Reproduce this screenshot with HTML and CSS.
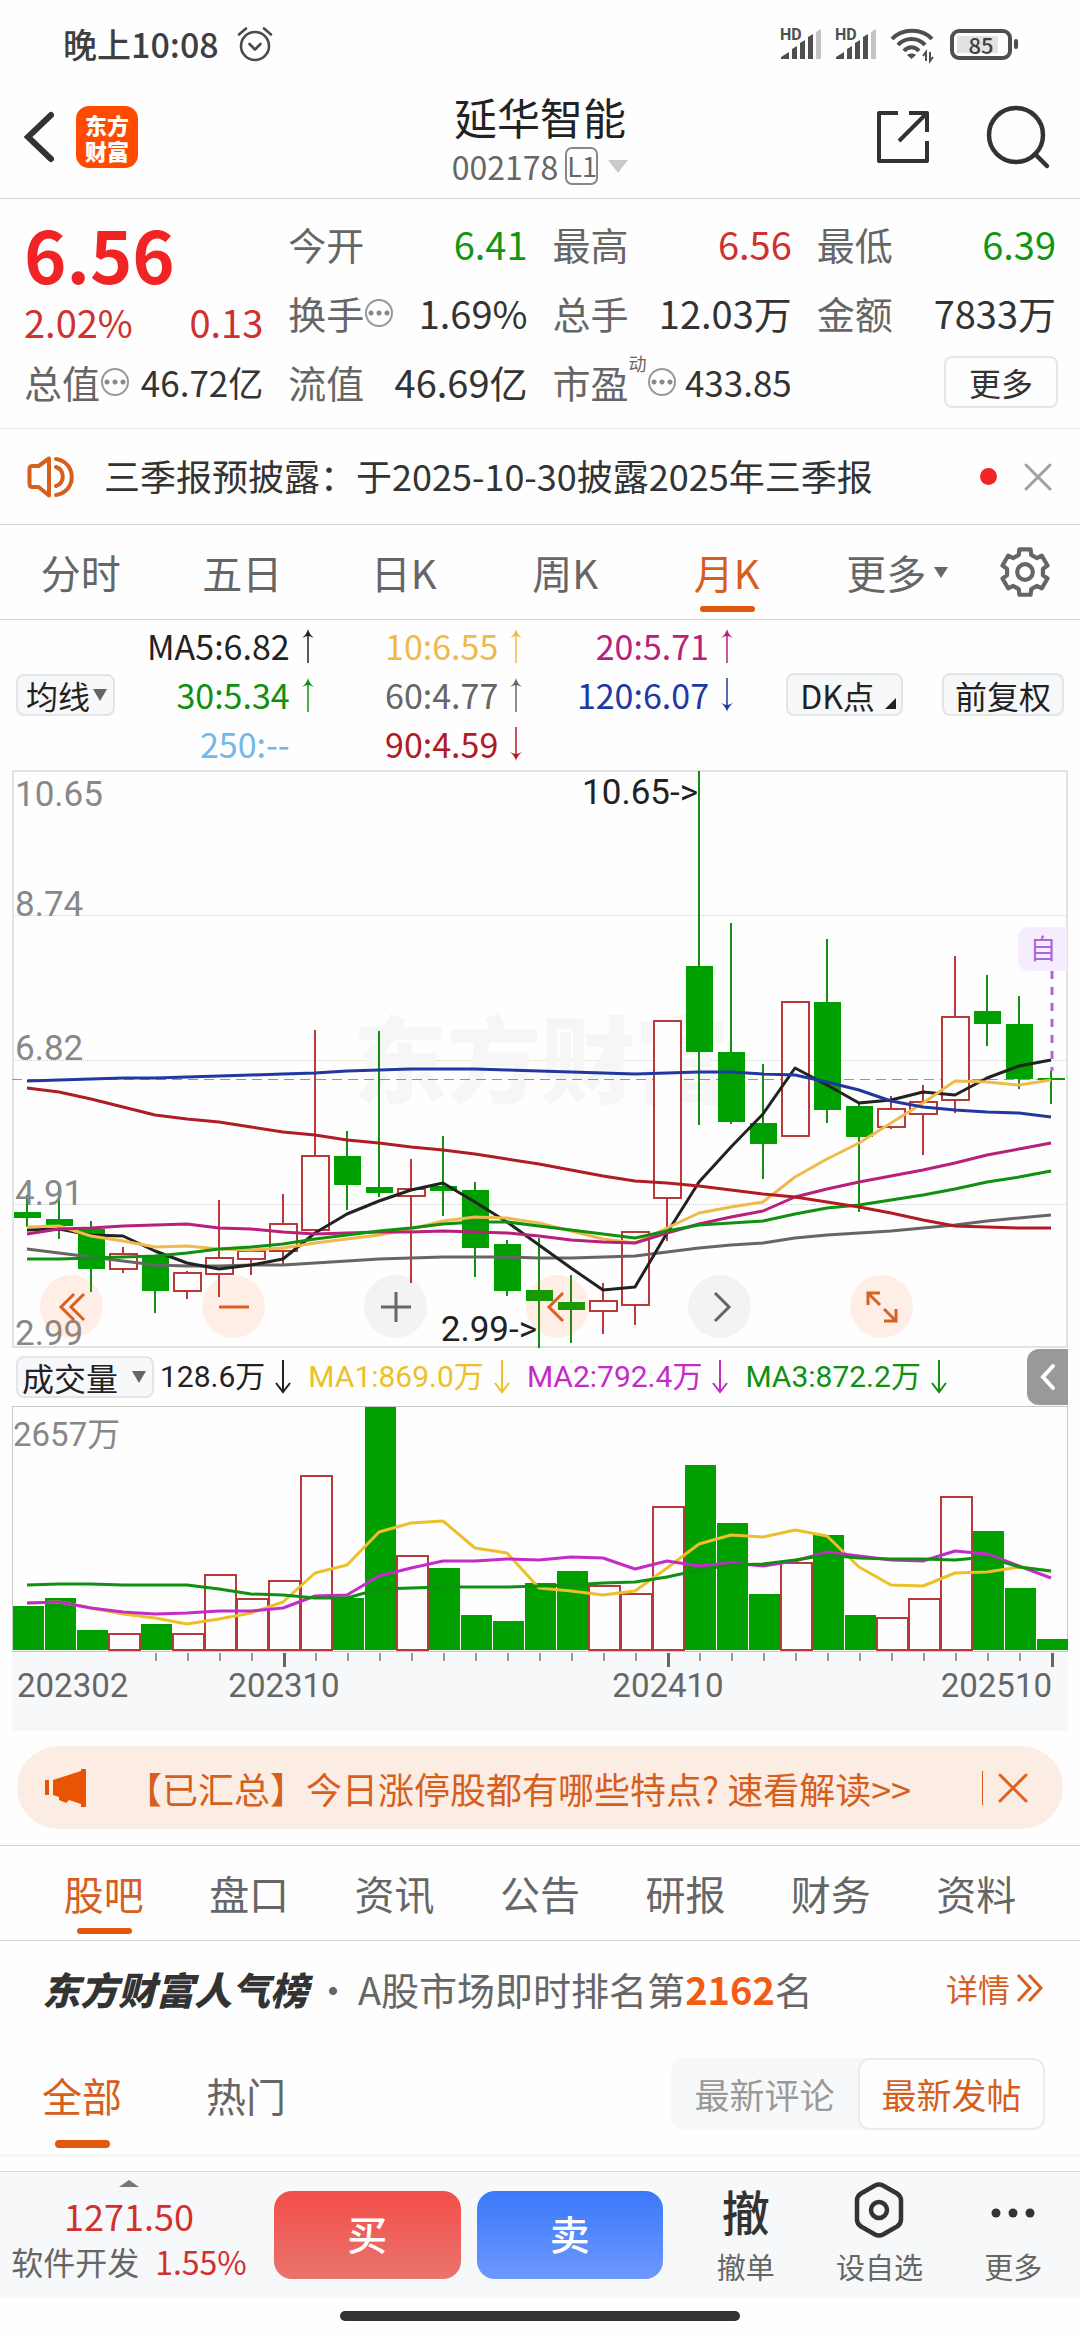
FILE: index.html
```html
<!DOCTYPE html>
<html lang="zh-CN">
<head>
  <meta charset="UTF-8">
  <meta name="viewport" content="width=device-width, initial-scale=1">
  <title>延华智能 002178</title>
  <link rel="stylesheet" href="styles.css">
</head>
<body>
  <!-- 状态栏 -->
  <div class="status">
    <span class="status-time">晚上10:08</span>
    <svg class="status-alarm" width="36" height="36" viewBox="0 0 36 36" fill="none" stroke="#4a4a4a" stroke-width="2.6" stroke-linecap="round" stroke-linejoin="round">
      <circle cx="18" cy="20" r="14"/>
      <path d="M12.500 18l5.500 5.500 5.500-5.500M2 8.500l7-6M34 8.500l-7-6"/>
    </svg>
    <div class="status-right">
      <svg width="42" height="32" viewBox="0 0 42 32">
        <text x="0" y="12" class="hd">HD</text>
        <path fill="#4f4f4f" d="M1 31v-2l8-5v7zM12 31v-10l5-3v13zM20 31v-16l5-3v19zM28 31v-22l5-3v25z"/>
        <path fill="#c4c4c4" d="M36 31v-27l5-3v30z"/>
      </svg>
      <svg width="42" height="32" viewBox="0 0 42 32">
        <text x="0" y="12" class="hd">HD</text>
        <path fill="#4f4f4f" d="M1 31v-2l8-5v7zM12 31v-10l5-3v13zM20 31v-16l5-3v19zM28 31v-22l5-3v25z"/>
        <path fill="#c4c4c4" d="M36 31v-27l5-3v30z"/>
      </svg>
      <svg width="44" height="36" viewBox="0 0 44 36" fill="none" stroke="#4f4f4f" stroke-width="4">
        <path d="M2 13C12 2 32 2 42 13M8 19c7-8 20-8 27 0M14 25c4-5 11-5 15 0"/>
        <path fill="#4f4f4f" stroke="none" d="M17 29c2-2 7-2 9 0l-4.500 4z"/>
        <path stroke-width="2" d="M36 35v-9l-3 4M40 26v9l3-4"/>
      </svg>
      <span class="battery"><span class="battery-level"></span><span class="battery-text">85</span></span>
    </div>
  </div>

  <!-- 标题栏 -->
  <header class="header">
    <button class="icon-btn" aria-label="返回">
      <svg width="34" height="54" viewBox="0 0 34 54" fill="none" stroke="#333" stroke-width="6" stroke-linecap="round"><path d="M29 5L6 27l23 22"/></svg>
    </button>
    <div class="logo">东方<br>财富</div>
    <div class="title">
      <h1>延华智能</h1>
      <p>002178<span class="level">L1</span><i class="caret"></i></p>
    </div>
    <button class="icon-btn share" aria-label="分享">
      <svg width="54" height="54" viewBox="0 0 54 54" fill="none" stroke="#333" stroke-width="4" stroke-linejoin="round"><path d="M22 3H3v48h48V31M33 3h18v19M51 3L23 31"/></svg>
    </button>
    <button class="icon-btn" aria-label="搜索">
      <svg width="64" height="64" viewBox="0 0 64 64" fill="none" stroke="#333" stroke-width="4.500" stroke-linecap="round"><circle cx="30" cy="30" r="27"/><path d="M49 49l12 12"/></svg>
    </button>
  </header>

  <!-- 行情 -->
  <section class="quote">
    <div class="price">
      <strong>6.56</strong>
      <div class="price-change"><span>2.02%</span><span>0.13</span></div>
    </div>
    <div class="cell"><span>今开</span><b class="down">6.41</b></div>
    <div class="cell"><span>最高</span><b class="up">6.56</b></div>
    <div class="cell"><span>最低</span><b class="down">6.39</b></div>
    <div class="cell"><span>换手<i class="dots"></i></span><b>1.69%</b></div>
    <div class="cell"><span>总手</span><b>12.03万</b></div>
    <div class="cell"><span>金额</span><b>7833万</b></div>
    <div class="cell small"><span>总值<i class="dots"></i></span><b>46.72亿</b></div>
    <div class="cell"><span>流值</span><b>46.69亿</b></div>
    <div class="cell small"><span>市盈<sup>动</sup><i class="dots"></i></span><b>433.85</b></div>
    <div class="cell end"><button class="more-btn">更多</button></div>
  </section>

  <!-- 公告 -->
  <section class="notice">
    <svg width="48" height="42" viewBox="0 0 48 42" fill="none" stroke="#d65f1e" stroke-width="4" stroke-linejoin="round" stroke-linecap="round">
      <path d="M2.500 13q0-3 3-3h6L22 2.500v37L11.500 31h-6q-3 0-3-3z"/>
      <path d="M29 11c9 3 9 16 0 19M29 3c21 3 21 33 0 36"/>
    </svg>
    <a href="#">三季报预披露：于2025-10-30披露2025年三季报</a>
    <i class="red-dot"></i>
    <button class="icon-btn" aria-label="关闭公告">
      <svg width="28" height="28" viewBox="0 0 28 28" stroke="#a0a0a0" stroke-width="3" stroke-linecap="round"><path d="M2 2l24 24M26 2L2 26"/></svg>
    </button>
  </section>

  <!-- 周期切换 -->
  <nav class="tabs period">
    <button class="tab">分时</button>
    <button class="tab">五日</button>
    <button class="tab">日K</button>
    <button class="tab">周K</button>
    <button class="tab active">月K</button>
    <button class="tab tab-more">更多<i class="tri"></i></button>
    <button class="icon-btn gear" aria-label="设置">
      <svg width="50" height="50" viewBox="0 0 48 48" fill="none" stroke="#666" stroke-width="4" stroke-linejoin="round">
        <path d="M18.600 2.200H29.400L30 7.600L35.200 10.600L40.200 8.400L45.600 17.800L41.200 21V27L45.600 30.200L40.200 39.600L35.200 37.400L30 40.400L29.400 45.800H18.600L18 40.400L12.800 37.400L7.800 39.600L2.400 30.200L6.800 27V21L2.400 17.800L7.800 8.400L12.800 10.600L18 7.600Z"/>
        <circle cx="24" cy="24" r="7.500"/>
      </svg>
    </button>
  </nav>

  <!-- 均线 -->
  <section class="ma">
    <span class="pick">
      <select aria-label="主图指标"><option>均线</option></select>
    </span>
    <div class="ma-list">
      <span class="c-black">MA5:6.82<svg class="arrow"><use href="#arrow-up"/></svg></span>
      <span class="c-yellow">10:6.55<svg class="arrow"><use href="#arrow-up"/></svg></span>
      <span class="c-magenta">20:5.71<svg class="arrow"><use href="#arrow-up"/></svg></span>
      <span class="c-green">30:5.34<svg class="arrow"><use href="#arrow-up"/></svg></span>
      <span class="c-gray">60:4.77<svg class="arrow"><use href="#arrow-up"/></svg></span>
      <span class="c-blue">120:6.07<svg class="arrow"><use href="#arrow-down"/></svg></span>
      <span class="c-sky">250:--<svg class="arrow"></svg></span>
      <span class="c-red">90:4.59<svg class="arrow"><use href="#arrow-down"/></svg></span>
    </div>
    <button class="chip chip-dk">DK点<i class="corner"></i></button>
    <button class="chip">前复权</button>
  </section>

  <!-- K线图 -->
  <section class="chart">
    <svg class="kline" id="kline" viewBox="12 770 1056 578">
      <rect class="frame" x="13" y="771" width="1054" height="576"/>
      <path class="grid" d="M13 915.500H1067M13 1060.500H1067M13 1204.500H1067"/>
      <text class="mark" x="353" y="1096">东方财富</text>
      <path class="now" d="M12 1079H1067"/>
      <g id="candles"></g>
      <g id="averages"></g>
      <g class="axis">
        <text x="15" y="806">10.65</text>
        <text x="15" y="916">8.74</text>
        <text x="15" y="1060">6.82</text>
        <text x="15" y="1205">4.91</text>
        <text x="15" y="1345">2.99</text>
      </g>
      <g class="peak">
        <text x="698" y="804">10.65-&gt;</text>
        <text x="537" y="1341">2.99-&gt;</text>
      </g>
      <path class="self-line" d="M1052 971V1071"/>
      <path class="self-bg" d="M1067 927h-37q-12 0-12 12v20q0 12 12 12h37z"/>
      <text class="self" x="1043" y="959">自</text>
    </svg>
    <div class="tools">
      <button class="warm" aria-label="最左"><svg width="30" height="30" viewBox="0 0 30 30"><path d="M17 2L4 15l13 13M27 2L14 15l13 13"/></svg></button>
      <button class="warm" aria-label="缩小"><svg width="30" height="30" viewBox="0 0 30 30"><path d="M0 15h30"/></svg></button>
      <button aria-label="放大"><svg width="30" height="30" viewBox="0 0 30 30"><path d="M0 15h30M15 0v30"/></svg></button>
      <button class="warm" aria-label="向左"><svg width="30" height="30" viewBox="0 0 30 30"><path d="M20 1L6 15l14 14"/></svg></button>
      <button aria-label="向右"><svg width="30" height="30" viewBox="0 0 30 30"><path d="M10 1l14 14-14 14"/></svg></button>
      <button class="warm" aria-label="全屏"><svg width="32" height="32" viewBox="0 0 32 32"><path d="M14 2H2v12M2 2l12 12M18 30h12V18M30 30L18 18"/></svg></button>
    </div>
  </section>

  <!-- 成交量 -->
  <section class="vol-head">
    <span class="pick pick-wide">
      <select aria-label="副图指标"><option>成交量</option></select>
    </span>
    <span class="c-black">128.6万<svg class="arrow-v"><use href="#arrow-vol"/></svg></span>
    <span class="v-yellow">MA1:869.0万<svg class="arrow-v"><use href="#arrow-vol"/></svg></span>
    <span class="v-magenta">MA2:792.4万<svg class="arrow-v"><use href="#arrow-vol"/></svg></span>
    <span class="c-green">MA3:872.2万<svg class="arrow-v"><use href="#arrow-vol"/></svg></span>
    <button class="fold" aria-label="展开"><svg width="16" height="28" viewBox="0 0 16 28" fill="none" stroke="#fff" stroke-width="4" stroke-linecap="round"><path d="M13 3L3 14l10 11"/></svg></button>
  </section>
  <section class="volume">
    <svg id="volume" viewBox="12 1406 1056 325">
      <rect class="axis-bg" x="12" y="1652" width="1056" height="79"/>
      <rect class="vol-frame" x="12.500" y="1406.500" width="1055" height="245"/>
      <text class="vol-max" x="13" y="1446">2657万</text>
      <g id="bars"></g>
      <g id="volAverages"></g>
      <g id="ticks"></g>
      <g class="dates">
        <text x="17" y="1697">202302</text>
        <text x="284" y="1697" text-anchor="middle">202310</text>
        <text x="668" y="1697" text-anchor="middle">202410</text>
        <text x="1052" y="1697" text-anchor="end">202510</text>
      </g>
    </svg>
  </section>

  <!-- 推广 -->
  <section class="banner">
    <svg width="42" height="38" viewBox="0 0 42 38" fill="#e85404"><path d="M0 11h4v15H0zM8 11L36 2V0h5v38h-5v-3l-12-4-3 3-7-3v-3l-6-2z"/></svg>
    <a href="#">【已汇总】今日涨停股都有哪些特点? 速看解读&gt;&gt;</a>
    <i class="banner-line"></i>
    <button class="icon-btn" aria-label="关闭推广">
      <svg width="30" height="30" viewBox="0 0 30 30" stroke="#e0601c" stroke-width="3" stroke-linecap="round"><path d="M2 2l26 26M28 2L2 28"/></svg>
    </button>
  </section>

  <nav class="tabs info">
    <button class="tab active">股吧</button>
    <button class="tab">盘口</button>
    <button class="tab">资讯</button>
    <button class="tab">公告</button>
    <button class="tab">研报</button>
    <button class="tab">财务</button>
    <button class="tab">资料</button>
  </nav>

  <section class="rank">
    <strong class="rank-name">东方财富人气榜</strong>
    <span class="rank-sep">·</span>
    <span>A股市场即时排名第<b>2162</b>名</span>
    <a href="#">详情<svg width="28" height="30" viewBox="0 0 28 30" fill="none" stroke="#d65f1e" stroke-width="3"><path d="M2 2l12 13L2 28M13 2l12 13-12 13"/></svg></a>
  </section>

  <section class="filter">
    <button class="tab active">全部</button>
    <button class="tab">热门</button>
    <div class="seg">
      <button>最新评论</button>
      <button class="on">最新发帖</button>
    </div>
  </section>

  <!-- 底部交易栏 -->
  <footer class="trade">
    <div class="index">
      <i class="index-tri"></i>
      <span class="index-value">1271.50</span>
      <span class="index-name">软件开发<b>1.55%</b></span>
    </div>
    <button class="buy">买</button>
    <button class="sell">卖</button>
    <div class="actions">
      <button><span class="che">撤</span>撤单</button>
      <button>
        <svg width="50" height="56" viewBox="0 0 50 56" fill="none" stroke="#333" stroke-width="4.500" stroke-linejoin="round">
          <path d="M21 3.500q4-2 8 0l14 8q4 2.500 4 7v19q0 4.500-4 7l-14 8q-4 2-8 0l-14-8q-4-2.500-4-7v-19q0-4.500 4-7z"/>
          <circle cx="25" cy="28" r="8"/>
        </svg>设自选
      </button>
      <button>
        <svg width="50" height="56" viewBox="0 0 50 56" fill="#333"><circle cx="8" cy="31" r="4.500"/><circle cx="25" cy="31" r="4.500"/><circle cx="42" cy="31" r="4.500"/></svg>更多
      </button>
    </div>
  </footer>
  <div class="home"><i></i></div>

  <svg class="defs" width="0" height="0">
    <symbol id="arrow-up" viewBox="0 0 14 34"><path d="M7 34V3" stroke="currentColor" stroke-width="1.500"/><path d="M7 0q1 5 6 9-4-2-6-2t-6 2q5-4 6-9z" fill="currentColor"/></symbol>
    <symbol id="arrow-down" viewBox="0 0 14 34"><path d="M7 0v31" stroke="currentColor" stroke-width="1.500"/><path d="M7 34q1-5 6-9-4 2-6 2t-6-2q5 4 6 9z" fill="currentColor"/></symbol>
    <symbol id="arrow-vol" viewBox="0 0 16 34"><path d="M8 0v32M1 23l7 9 7-9" fill="none" stroke="currentColor" stroke-width="2"/></symbol>
  </svg>
  <script src="script.js"></script>
</body>
</html>
```
FILE: styles.css
```css
* {
  box-sizing: border-box;
}
body {
  margin: 0;
  background: #fefefe;
  color: #333;
  font-family: "Noto Sans CJK SC", sans-serif;
  font-size: 38px;
}
button,
select {
  margin: 0;
  padding: 0;
  border: none;
  background: none;
  color: inherit;
  font: inherit;
  cursor: pointer;
}
a {
  color: inherit;
  text-decoration: none;
}
i {
  font-style: normal;
}
svg {
  display: block;
  flex: none;
  overflow: visible;
}
.defs {
  position: absolute;
}
.icon-btn {
  display: flex;
  align-items: center;
}

/* 状态栏 */
.status {
  display: flex;
  align-items: center;
  height: 76px;
  padding: 12px 63px 0 63px;
  color: #3f3f3f;
}
.status-time {
  font-size: 34px;
  font-weight: 500;
  line-height: 44px;
}
.status-alarm {
  margin-left: 18px;
}
.status-right {
  display: flex;
  align-items: center;
  gap: 13px;
  margin-left: auto;
}
.hd {
  font: bold 16px Roboto, sans-serif;
  fill: #4f4f4f;
}
.battery {
  position: relative;
  display: flex;
  justify-content: center;
  align-items: center;
  width: 62px;
  height: 31px;
  margin: 0 5px 0 3px;
  border: 4px solid #4f4f4f;
  border-radius: 9px;
  font-size: 22px;
  font-weight: 500;
}
.battery::after {
  content: "";
  position: absolute;
  right: -10px;
  width: 4px;
  height: 10px;
  border-radius: 2px;
  background: #4f4f4f;
}
.battery-level {
  position: absolute;
  left: 3px;
  width: 41px;
  height: 17px;
  background: #e2e2e2;
}
.battery-text {
  position: relative;
  line-height: 22px;
}

/* 标题栏 */
.header {
  position: relative;
  display: flex;
  align-items: center;
  height: 123px;
  padding: 0 30px 0 22px;
  border-bottom: 1px solid #d4d4d4;
}
.logo {
  width: 62px;
  height: 62px;
  margin-left: 20px;
  padding-top: 5px;
  border-radius: 13px;
  background: #ff4a00;
  color: #fff;
  font-size: 22px;
  font-weight: 900;
  line-height: 26px;
  text-align: center;
}
.title {
  position: absolute;
  left: 0;
  right: 0;
  text-align: center;
  pointer-events: none;
}
.title h1 {
  margin: 0;
  color: #222;
  font-size: 43px;
  font-weight: 400;
  line-height: 58px;
}
.title p {
  display: flex;
  justify-content: center;
  align-items: center;
  margin: 0;
  color: #666;
  font-size: 32px;
  line-height: 42px;
}
.level {
  width: 33px;
  height: 38px;
  margin: 0 10px 0 7px;
  border: 2px solid #888;
  border-radius: 7px;
  font-size: 27px;
  line-height: 34px;
}
.caret {
  border: 10px solid transparent;
  border-top: 13px solid #c9c9c9;
  border-bottom: none;
}
.share {
  margin-left: auto;
  margin-right: 56px;
}

/* 行情 */
.quote {
  display: grid;
  grid-template-columns: repeat(4, 1fr);
  grid-auto-rows: 69px;
  column-gap: 25px;
  padding: 10px 24px 12px;
  border-bottom: 1px solid #e8e8e8;
}
.price {
  grid-row: span 2;
  color: #d03030;
}
.price strong {
  display: block;
  color: #f02424;
  font-size: 72px;
  font-weight: 700;
  line-height: 88px;
}
.price-change {
  display: flex;
  justify-content: space-between;
  line-height: 50px;
}
.cell {
  display: flex;
  justify-content: space-between;
  align-items: center;
  white-space: nowrap;
}
.cell.end {
  justify-content: flex-end;
}
.cell span {
  display: flex;
  align-items: center;
  color: #666;
}
.cell b {
  font-weight: 400;
}
.cell.small b {
  font-size: 35px;
}
.cell sup {
  align-self: flex-start;
  font-size: 18px;
  line-height: 18px;
}
.dots {
  width: 28px;
  height: 28px;
  margin-left: 1px;
  border: 2px solid #999;
  border-radius: 50%;
  background:
    radial-gradient(circle, #888 2px, transparent 3px) 0 0 / 8px 24px repeat-x;
}
.up {
  color: #d03030;
}
.down {
  color: #109610;
}
.more-btn {
  width: 114px;
  height: 52px;
  margin-right: -2px;
  border: 2px solid #e6e6e6;
  border-radius: 8px;
  font-size: 32px;
  line-height: 46px;
}

/* 公告 */
.notice {
  display: flex;
  align-items: center;
  height: 96px;
  padding: 0 28px 0 27px;
  border-bottom: 1px solid #d4d4d4;
}
.notice a {
  margin-left: 29px;
  padding-bottom: 4px;
  font-size: 36px;
}
.red-dot {
  width: 17px;
  height: 17px;
  margin: 0 27px 0 auto;
  border-radius: 50%;
  background: #f22424;
}

/* 标签栏 */
.tabs {
  display: flex;
  height: 95px;
  border-bottom: 1px solid #d4d4d4;
}
.tab {
  position: relative;
  flex: 1;
  color: #666;
  font-size: 40px;
  line-height: 60px;
}
.tab.active {
  color: #d65f1e;
}
.tab.active::after {
  content: "";
  position: absolute;
  left: 50%;
  bottom: 7px;
  width: 55px;
  height: 6px;
  margin-left: -27px;
  border-radius: 3px;
  background: #e2570c;
}
.tab-more {
  display: flex;
  justify-content: center;
  align-items: center;
}
.tab-more::before {
  content: "";
  width: 18px;
}
.tri {
  margin-left: 8px;
  border: 7px solid transparent;
  border-top: 11px solid #666;
  border-bottom: none;
}
.gear {
  justify-content: center;
  width: 111px;
}

/* 均线 */
.ma {
  display: flex;
  align-items: center;
  padding: 1px 16px 2px;
  font-size: 34px;
}
.pick {
  position: relative;
  width: 99px;
}
.pick::after {
  content: "";
  position: absolute;
  right: 8px;
  top: 15px;
  border: 7px solid transparent;
  border-top: 12px solid #666;
  border-bottom: none;
  pointer-events: none;
}
.pick select {
  display: block;
  width: 100%;
  height: 42px;
  padding-left: 8px;
  border: 2px solid #e3e4e6;
  border-radius: 8px;
  background: #f7f8fa;
  color: #222;
  font-size: 32px;
  line-height: 38px;
  appearance: none;
}
.pick-wide {
  width: 138px;
}
.pick-wide select {
  padding-left: 4px;
}
.ma-list {
  display: grid;
  grid-template-columns: 200fr 209fr 211fr;
  flex: 1;
  margin-right: 52px;
}
.ma-list span {
  display: flex;
  justify-content: flex-end;
  align-items: center;
  height: 49px;
}
.arrow {
  width: 14px;
  height: 34px;
  margin-left: 11px;
}
.chip {
  position: relative;
  width: 122px;
  height: 43px;
  border: 2px solid #e3e4e6;
  border-radius: 8px;
  background: #f7f8fa;
  color: #222;
  font-size: 32px;
  line-height: 38px;
}
.chip-dk {
  width: 117px;
  margin-right: 39px;
  padding-right: 14px;
}
.corner {
  position: absolute;
  right: 5px;
  bottom: 5px;
  border-left: 11px solid transparent;
  border-bottom: 11px solid #222;
}
.c-black { color: #222; }
.c-yellow { color: #f0b94c; }
.c-magenta { color: #b8207c; }
.c-green { color: #109010; }
.c-gray { color: #666; }
.c-blue { color: #2038a0; }
.c-sky { color: #72b8ea; }
.c-red { color: #b01c24; }
.v-yellow { color: #ebc028; }
.v-magenta { color: #c42cc8; }

/* K线图 */
.chart {
  position: relative;
  margin: 0 12px;
}
.kline {
  width: 100%;
}
.frame {
  fill: none;
  stroke: #e2e2e2;
  stroke-width: 2;
}
.grid {
  stroke: #cfcfcf;
  stroke-dasharray: 1 1;
}
.mark {
  fill: #f6f6f6;
  font-size: 94px;
  font-weight: 900;
}
.now {
  stroke: #cf8450;
  stroke-width: 1;
  stroke-dasharray: 10 6;
  shape-rendering: crispEdges;
}
.axis text,
.peak text {
  font: 35px Roboto, sans-serif;
  fill: #888;
}
.peak text {
  fill: #222;
  text-anchor: end;
}
.self-line {
  stroke: #a768dc;
  stroke-width: 3;
  stroke-dasharray: 8 8;
}
.self-bg {
  fill: #f5edfd;
}
.self {
  fill: #a768dc;
  font-size: 27px;
  text-anchor: middle;
}
.candle-up {
  fill: #fefefe;
  stroke: #b83a38;
  stroke-width: 2;
}
.candle-down {
  fill: #00a000;
}
.wick-up {
  stroke: #b83a38;
  stroke-width: 2;
}
.wick-down {
  stroke: #109010;
  stroke-width: 2;
}
.line {
  fill: none;
  stroke: currentColor;
  stroke-width: 3;
  stroke-linejoin: round;
}
.tools {
  position: absolute;
  left: 28px;
  bottom: 10px;
  display: flex;
  gap: 99px;
}
.tools button {
  display: flex;
  justify-content: center;
  align-items: center;
  width: 63px;
  height: 63px;
  border-radius: 50%;
  background: rgba(60, 60, 60, 0.06);
}
.tools .warm {
  background: rgba(255, 100, 20, 0.1);
}
.tools path {
  fill: none;
  stroke: #666;
  stroke-width: 3;
}
.tools .warm path {
  stroke: #da6020;
}

/* 成交量 */
.vol-head {
  display: flex;
  align-items: center;
  gap: 17px;
  height: 58px;
  padding: 0 12px 0 16px;
  font-family: Roboto, "Noto Sans CJK SC", sans-serif;
  font-size: 30px;
  line-height: 42px;
}
.vol-head > span {
  display: flex;
  align-items: center;
}
.vol-head .pick {
  margin-right: -11px;
  font-family: "Noto Sans CJK SC", sans-serif;
}
.arrow-v {
  width: 16px;
  height: 34px;
  margin-left: 10px;
}
.fold {
  display: flex;
  justify-content: center;
  align-items: center;
  width: 41px;
  height: 56px;
  margin-left: auto;
  border-radius: 12px 0 0 12px;
  background: #999;
}
.volume {
  margin: 0 12px;
}
.volume svg {
  width: 100%;
}
.axis-bg {
  fill: #f7f8fa;
}
.vol-frame {
  fill: none;
  stroke: #c8c8c8;
}
.vol-max,
.dates text {
  font: 33px Roboto, "Noto Sans CJK SC", sans-serif;
  fill: #888;
}
.dates text {
  fill: #666;
}
.tick {
  fill: #999;
}
.tick-major {
  fill: #666;
}

/* 推广 */
.banner {
  display: flex;
  align-items: center;
  height: 83px;
  margin: 15px 17px 16px;
  padding: 0 35px 0 28px;
  border-radius: 42px;
  background: #fcede4;
  color: #d65f1e;
}
.banner a {
  margin-left: 39px;
  font-size: 36px;
  white-space: nowrap;
}
.banner-line {
  width: 1px;
  height: 34px;
  margin: 0 15px 0 auto;
  background: #d65f1e;
}
.info {
  height: 96px;
  padding: 0 31px;
  border-top: 1px solid #d4d4d4;
}
.info .tab.active::after {
  bottom: 6px;
}

/* 人气榜 */
.rank {
  display: flex;
  align-items: center;
  height: 100px;
  padding: 0 36px 6px 42px;
  color: #666;
}
.rank-name {
  color: #333;
  font-style: italic;
  font-weight: 900;
}
.rank-sep {
  width: 50px;
  text-align: center;
}
.rank b {
  color: #f25c14;
  font-weight: 700;
}
.rank a {
  display: flex;
  align-items: center;
  gap: 6px;
  margin-left: auto;
  color: #d65f1e;
  font-size: 32px;
}
.filter {
  display: flex;
  align-items: flex-start;
  height: 116px;
  padding: 17px 35px 0 42px;
  border-bottom: 3px solid #f5f6f7;
}
.filter .tab {
  flex: none;
  height: 92px;
  margin-right: 84px;
  padding-bottom: 18px;
}
.filter .tab.active::after {
  bottom: 2px;
  height: 8px;
  border-radius: 4px;
}
.seg {
  display: flex;
  margin-left: auto;
  border-radius: 12px;
  background: #f7f8fa;
  color: #999;
  font-size: 35px;
}
.seg button {
  width: 187px;
  height: 72px;
  padding-bottom: 2px;
  border-radius: 12px;
}
.seg .on {
  border: 2px solid #ececec;
  background: #fefefe;
  color: #d65f1e;
}

/* 底部 */
.trade {
  display: grid;
  grid-template-columns: 258px 1fr 1fr 401px;
  column-gap: 16px;
  align-items: center;
  height: 126px;
  margin-top: 14px;
  border-top: 1px solid #d4dad4;
  background: #f7f8fa;
}
.index {
  display: flex;
  flex-direction: column;
  align-items: center;
  padding-bottom: 6px;
  color: #d03030;
}
.index-tri {
  border: 10px solid transparent;
  border-bottom: 7px solid #777;
  border-top: none;
}
.index-value {
  margin-top: 4px;
  font-size: 36px;
  line-height: 48px;
}
.index-name {
  color: #666;
  font-size: 32px;
  line-height: 44px;
}
.index-name b {
  margin-left: 16px;
  color: #d03030;
  font-weight: 400;
}
.buy,
.sell {
  height: 88px;
  padding-bottom: 4px;
  border-radius: 18px;
  background: linear-gradient(#f34f49, #ea736e);
  color: #fff;
  font-size: 40px;
  font-weight: 500;
}
.sell {
  background: linear-gradient(#3b78f9, #6d98ff);
}
.actions {
  display: grid;
  grid-template-columns: repeat(3, 1fr);
  align-self: stretch;
}
.actions button {
  display: flex;
  flex-direction: column;
  align-items: center;
  padding-top: 10px;
  color: #666;
  font-size: 29px;
  line-height: 56px;
}
.che {
  height: 56px;
  color: #333;
  font-size: 48px;
  font-weight: 500;
}
.home {
  display: flex;
  justify-content: center;
  align-items: center;
  height: 43px;
  padding-bottom: 6px;
}
.home i {
  width: 400px;
  height: 10px;
  border-radius: 5px;
  background: #333;
}
```
FILE: script.js
```js
// 每根K线: [涨1/跌0, 最高, 最低, 实体上沿, 实体下沿]
const candles = [
  [0, 1195, 1227, 1212, 1218], [0, 1185, 1239, 1219, 1226], [0, 1221, 1292, 1229, 1269],
  [1, 1247, 1273, 1254, 1269], [0, 1255, 1313, 1255, 1291], [1, 1271, 1299, 1273, 1291],
  [1, 1200, 1297, 1258, 1274], [1, 1251, 1275, 1251, 1259], [1, 1194, 1266, 1224, 1251],
  [1, 1030, 1230, 1156, 1230], [0, 1131, 1210, 1156, 1185], [0, 1031, 1197, 1187, 1193],
  [1, 1159, 1283, 1189, 1196], [0, 1136, 1216, 1186, 1191], [0, 1182, 1277, 1190, 1248],
  [0, 1240, 1296, 1244, 1291], [0, 1238, 1348, 1290, 1301], [0, 1275, 1343, 1302, 1310],
  [1, 1283, 1334, 1301, 1311], [1, 1232, 1325, 1232, 1305], [1, 1021, 1241, 1021, 1198],
  [0, 771, 1125, 966, 1052], [0, 923, 1124, 1052, 1122], [0, 1064, 1179, 1123, 1144],
  [1, 1002, 1136, 1002, 1136], [0, 939, 1123, 1002, 1110], [0, 1104, 1212, 1106, 1137],
  [1, 1096, 1129, 1109, 1127], [1, 1085, 1155, 1102, 1114], [1, 956, 1113, 1017, 1100],
  [0, 975, 1046, 1011, 1024], [0, 996, 1089, 1024, 1079], [0, 1071, 1104, 1078, 1080]
];

const averages = [
  ['c-gray', [1249, 1253, 1257, 1261, 1265, 1266, 1266, 1265, 1265, 1263, 1261, 1259, 1258, 1257, 1257, 1257, 1258, 1258, 1257, 1256, 1252, 1248, 1245, 1243, 1238, 1235, 1233, 1231, 1228, 1225, 1221, 1218, 1215]],
  ['c-black', [1230, 1229, 1235, 1236, 1251, 1263, 1269, 1265, 1259, 1233, 1214, 1201, 1190, 1183, 1202, 1222, 1245, 1268, 1290, 1287, 1233, 1182, 1147, 1114, 1068, 1085, 1103, 1100, 1092, 1095, 1078, 1066, 1060]],
  ['c-yellow', [1227, 1226, 1236, 1241, 1247, 1246, 1249, 1250, 1248, 1243, 1239, 1235, 1229, 1221, 1217, 1218, 1223, 1231, 1239, 1243, 1228, 1213, 1207, 1202, 1177, 1159, 1143, 1123, 1103, 1081, 1082, 1085, 1080]],
  ['c-magenta', [1234, 1229, 1228, 1226, 1225, 1224, 1228, 1229, 1232, 1234, 1233, 1232, 1232, 1231, 1232, 1233, 1236, 1240, 1242, 1243, 1233, 1224, 1217, 1211, 1197, 1189, 1182, 1176, 1170, 1163, 1155, 1149, 1143]],
  ['c-green', [1259, 1259, 1258, 1257, 1256, 1253, 1249, 1247, 1244, 1239, 1235, 1231, 1228, 1224, 1222, 1222, 1226, 1230, 1234, 1238, 1231, 1225, 1223, 1221, 1214, 1208, 1205, 1200, 1195, 1189, 1182, 1177, 1171]],
  ['c-blue', [1081, 1080, 1079, 1078, 1078, 1077, 1076, 1075, 1074, 1073, 1071, 1070, 1069, 1069, 1069, 1070, 1071, 1072, 1073, 1074, 1073, 1072, 1072, 1074, 1075, 1082, 1090, 1101, 1107, 1110, 1112, 1113, 1117]],
  ['c-red', [1088, 1092, 1099, 1107, 1115, 1119, 1122, 1127, 1132, 1135, 1140, 1143, 1147, 1150, 1154, 1159, 1164, 1170, 1176, 1181, 1183, 1186, 1190, 1194, 1197, 1202, 1207, 1213, 1220, 1226, 1227, 1228, 1228]]
];

// 成交量柱顶
const bars = [1606, 1598, 1630, 1634, 1624, 1634, 1575, 1599, 1581, 1476, 1598, 1407, 1556, 1568, 1615, 1621, 1583, 1571, 1586, 1594, 1507, 1465, 1523, 1594, 1563, 1535, 1615, 1618, 1599, 1497, 1531, 1588, 1639];

const volAverages = [
  ['v-yellow', [1603, 1602, 1608, 1614, 1618, 1624, 1619, 1613, 1602, 1573, 1565, 1532, 1523, 1521, 1548, 1553, 1588, 1591, 1595, 1591, 1568, 1544, 1535, 1537, 1530, 1536, 1567, 1585, 1586, 1573, 1572, 1567, 1571]],
  ['v-magenta', [1603, 1602, 1608, 1612, 1614, 1613, 1611, 1611, 1608, 1596, 1595, 1576, 1568, 1561, 1561, 1559, 1560, 1557, 1558, 1569, 1561, 1566, 1563, 1566, 1561, 1552, 1556, 1560, 1561, 1551, 1554, 1566, 1578]],
  ['c-green', [1585, 1584, 1584, 1585, 1585, 1585, 1589, 1594, 1595, 1598, 1598, 1589, 1588, 1587, 1587, 1587, 1586, 1585, 1583, 1582, 1577, 1570, 1565, 1564, 1560, 1555, 1558, 1559, 1559, 1560, 1557, 1567, 1571]]
];

const step = 32;

function add(parent, tag, attrs) {
  const el = document.createElementNS('http://www.w3.org/2000/svg', tag);
  for (const key in attrs) el.setAttribute(key, attrs[key]);
  document.getElementById(parent).appendChild(el);
}

function drawLine(parent, name, ys) {
  add(parent, 'polyline', {
    class: 'line ' + name,
    points: ys.map((y, i) => (27 + i * step) + ',' + y).join(' ')
  });
}

candles.forEach(([up, high, low, top, bottom], i) => {
  const x = 27 + i * step;
  add('candles', 'path', { class: up ? 'wick-up' : 'wick-down', d: `M${x} ${high}V${low}` });
  add('candles', 'rect', {
    class: up ? 'candle-up' : 'candle-down',
    x: x - 13, y: top, width: 27, height: bottom - top
  });
});
averages.forEach(([name, ys]) => drawLine('averages', name, ys));

bars.forEach((top, i) => {
  add('bars', 'rect', {
    class: candles[i][0] ? 'candle-up' : 'candle-down',
    x: 13 + i * step, y: top, width: 31, height: 1650 - top
  });
});
volAverages.forEach(([name, ys]) => drawLine('volAverages', name, ys));

// 时间刻度
for (let i = 4; i < candles.length; i++) {
  const major = i % 12 === 8;
  add('ticks', 'rect', {
    class: major ? 'tick-major' : 'tick',
    x: 27 + i * step, y: 1653, width: major ? 3 : 2, height: major ? 14 : 8
  });
}
```
